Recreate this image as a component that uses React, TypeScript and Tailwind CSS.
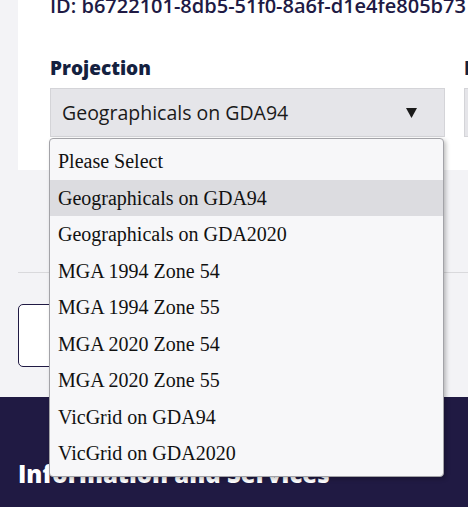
import React from "react";

const options = [
  "Please Select",
  "Geographicals on GDA94",
  "Geographicals on GDA2020",
  "MGA 1994 Zone 54",
  "MGA 1994 Zone 55",
  "MGA 2020 Zone 54",
  "MGA 2020 Zone 55",
  "VicGrid on GDA94",
  "VicGrid on GDA2020",
];

export default function App() {
  return (
    <div className="relative flex h-[507px] w-[468px] flex-col overflow-hidden bg-[#f3f3f6] font-['Open_Sans',sans-serif]">
      <div className="ml-[18px] flex h-[170px] shrink-0 flex-col bg-white pl-[32px]">
        <div className="-mt-[6px] h-[24px] whitespace-nowrap text-[20px] leading-[24px] font-semibold text-[#201a44]">
          ID: b6722101-8db5-51f0-8a6f-d1e4fe805b73
        </div>
        <div className="mt-[35px] flex gap-[19px]">
          <div className="w-[395px] shrink-0">
            <div className="h-[30px] text-[19px] leading-[30px] font-extrabold text-[#14213f]">Projection</div>
            <div className="mt-[5px] flex h-[49px] items-center justify-between border border-[#d4d4d8] bg-[#e5e5e9] pl-[11px] pr-[27px]">
              <span className="text-[19.5px] text-[#1a1a1a]">Geographicals on GDA94</span>
              <svg width="11" height="10" viewBox="0 0 11 10">
                <path d="M0 0 L11 0 L5.5 10 Z" fill="#1a1a1a" />
              </svg>
            </div>
          </div>
          <div className="w-[200px] shrink-0">
            <div className="h-[30px] text-[19px] leading-[30px] font-extrabold text-[#14213f]">Format</div>
            <div className="mt-[5px] h-[49px] border border-[#d4d4d8] bg-[#e5e5e9]" />
          </div>
        </div>
      </div>
      <div className="ml-[18px] mt-[102px] shrink-0 border-t border-[#d9d9dc]" />
      <div className="ml-[18px] mt-[31px] h-[63px] w-[160px] shrink-0 rounded-[5px] border border-[#201a44] bg-white" />
      <div className="mt-[30px] h-[110px] shrink-0 bg-[#201a43] pl-[18px] pt-[62px]">
        <div className="whitespace-nowrap text-[24px] leading-[30px] font-extrabold text-white">Information and Services</div>
      </div>
      <div className="absolute left-[49px] top-[138px] w-[395px] rounded-[4px] border border-[#a3a3a8] bg-[#f7f7f9] py-[4px] shadow-[2px_2px_4px_rgba(0,0,0,0.25)] font-['Liberation_Serif',serif]">
        {options.map((o, i) => (
          <div
            key={o}
            className={`h-[36.5px] pl-[8px] text-[20px] leading-[36.5px] text-[#111] ${i === 1 ? "bg-[#dcdce0]" : ""}`}
          >
            {o}
          </div>
        ))}
      </div>
    </div>
  );
}
